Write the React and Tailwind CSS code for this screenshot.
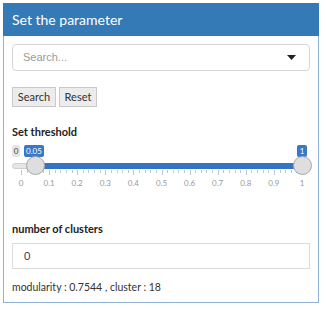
export default function App() {
  const ticks = [];
  for (let i = 0; i <= 50; i++) ticks.push(i);
  const labels = ["0", "0.1", "0.2", "0.3", "0.4", "0.5", "0.6", "0.7", "0.8", "0.9", "1"];
  const x0 = 18;
  const span = 281;
  return (
    <div className="w-[326px] h-[310px] bg-white pt-[3px] pl-[3px]" style={{ fontFamily: "Lato, 'Open Sans', sans-serif" }}>
      <div className="w-[316px] h-[300px] border border-[#8fb2d8] flex flex-col">
        <div className="h-[33px] bg-[#337ab7] text-white text-[14px] -mt-px -mx-px pl-[9px] flex items-center">Set the parameter</div>
        <div className="px-[8px] pt-[8px] flex flex-col">
          <div className="h-[27px] border border-[#d6d6d6] rounded-[4px] flex items-center justify-between pl-[10px] pr-[13px]">
            <span className="text-[11px] text-[#9a9a9a]" style={{ fontFamily: "'Liberation Sans', Arial, sans-serif" }}>Search...</span>
            <svg width="9" height="5" viewBox="0 0 9 5"><path d="M0 0 L9 0 L4.5 5 Z" fill="#222" /></svg>
          </div>
          <div className="flex gap-[3px] mt-[16px]">
            <div className="h-[20px] w-[44px] bg-[#ececec] border border-[#c9c9c9] text-[11px] text-[#333] flex items-center justify-center">Search</div>
            <div className="h-[20px] w-[38px] bg-[#ececec] border border-[#c9c9c9] text-[11px] text-[#333] flex items-center justify-center">Reset</div>
          </div>
          <div className="mt-[17px] text-[11px] font-bold text-[#222] leading-[16px]">Set threshold</div>
          <div className="relative h-[50px] mt-[3px]">
            <div className="absolute left-[0px] top-[2px] h-[12px] w-[8px] bg-[#e4e4e4] rounded-[2px] text-[8px] text-[#444] flex items-center justify-center">0</div>
            <div className="absolute left-[12px] top-[2px] h-[12px] w-[20px] bg-[#3878c8] rounded-[2px] text-[8px] text-white flex items-center justify-center">0.05</div>
            <div className="absolute left-[285px] top-[2px] h-[12px] w-[10px] bg-[#3878c8] rounded-[2px] text-[8px] text-white flex items-center justify-center">1</div>
            <div className="absolute left-[0px] top-[20px] h-[6px] w-[295px] rounded-full bg-[#e6e6e6] border border-[#d0d0d0]" />
            <div className="absolute left-[23px] top-[20px] h-[6px] w-[268px] bg-[#3573c4]" />
            {ticks.map((t) => (
              <div
                key={t}
                className="absolute w-px bg-[#b8c6d8]"
                style={{ left: x0 - 12 + 3 + (span * t) / 50, top: 27, height: t % 5 === 0 ? 5 : 3 }}
              />
            ))}
            {labels.map((l, i) => (
              <div
                key={l}
                className="absolute text-[8px] text-[#999] w-[20px] text-center"
                style={{ left: x0 - 12 + 3 + (span * i) / 10 - 10, top: 34 }}
              >
                {l}
              </div>
            ))}
            <div className="absolute left-[14px] top-[13px] w-[19px] h-[19px] rounded-full bg-[#dedede] border border-[#a8a8a8]" />
            <div className="absolute left-[281px] top-[13px] w-[19px] h-[19px] rounded-full bg-[#dedede] border border-[#a8a8a8]" />
          </div>
          <div className="mt-[28px] text-[11px] font-bold text-[#222] leading-[16px]">number of clusters</div>
          <div className="mt-[6px] h-[26px] border border-[#dcdcdc] flex items-center pl-[11px] text-[11px] text-[#444]">0</div>
          <div className="mt-[11px] text-[10.5px] text-[#333] leading-[14px]">modularity : 0.7544 , cluster : 18</div>
        </div>
      </div>
    </div>
  );
}
